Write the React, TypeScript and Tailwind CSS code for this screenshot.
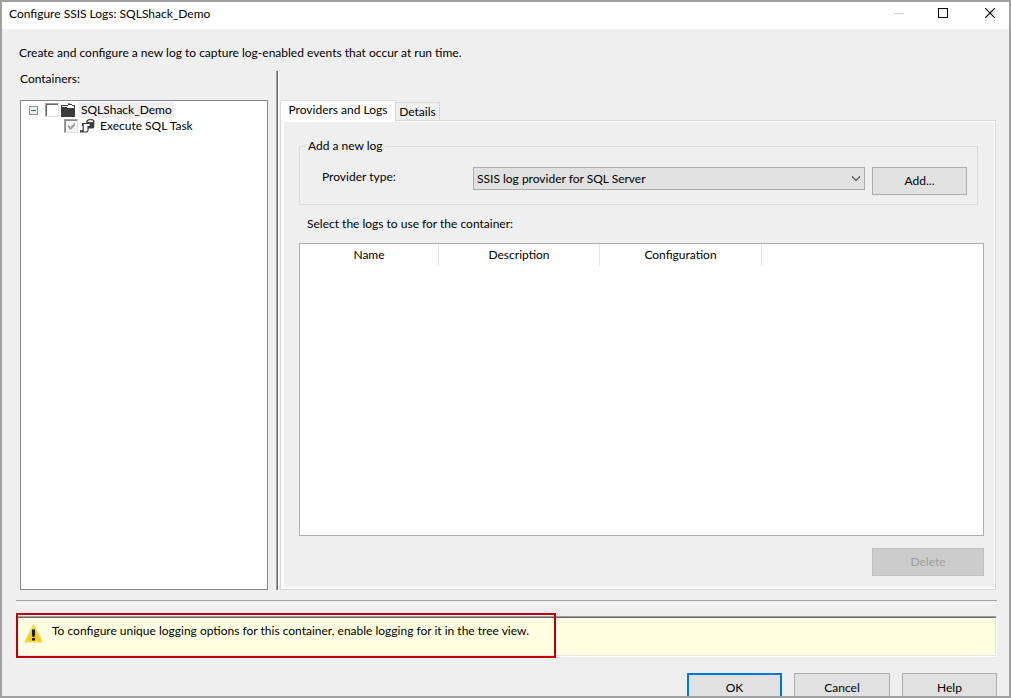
import { useState, type ReactNode } from "react";

const columns = ["Name", "Description", "Configuration"];
const providers = ["SSIS log provider for SQL Server"];

interface PushButtonProps {
    children: ReactNode;
    className: string;
    disabled?: boolean;
}

function PushButton({ children, className, disabled }: PushButtonProps) {
    return (
        <button
            type="button"
            disabled={disabled}
            className={`shrink-0 text-center disabled:border-[#bfbfbf] disabled:bg-[#cccccc] disabled:text-[#a0a0a0] ${className}`}
        >
            {children}
        </button>
    );
}

function TitleBar() {
    return (
        <header className="flex h-[27px] shrink-0 items-start justify-between bg-white pl-[7px]">
            <h1 className="pt-1 leading-4">Configure SSIS Logs: SQLShack_Demo</h1>
            <div className="flex">
                <button type="button" aria-label="Minimize" disabled className="flex h-[22px] w-[45px] items-center justify-center">
                    <svg width="10" height="10" shapeRendering="crispEdges">
                        <path d="M0 5.5h10" stroke="#cccccc" />
                    </svg>
                </button>
                <button type="button" aria-label="Maximize" className="flex h-[22px] w-[45px] items-center justify-center">
                    <svg width="11" height="10" shapeRendering="crispEdges">
                        <rect x="0.5" y="0.5" width="9" height="9" fill="none" stroke="#000" />
                    </svg>
                </button>
                <button type="button" aria-label="Close" className="flex h-[22px] w-[43px] items-center justify-center pl-[5px]">
                    <svg width="10" height="10">
                        <path d="M0.3 0.3l9.4 9.4M9.7 0.3l-9.4 9.4" stroke="#000" strokeWidth="1.2" />
                    </svg>
                </button>
            </div>
        </header>
    );
}

function TreeCheckbox({ id, checked, onChange }: { id: string; checked: boolean; onChange: () => void }) {
    return (
        <span className="relative h-3.5 w-3.5 shrink-0">
            <input
                id={id}
                type="checkbox"
                checked={checked}
                onChange={onChange}
                className="block h-3.5 w-3.5 appearance-none border border-t-[#a0a0a0] border-r-[#e3e3e3] border-b-[#e3e3e3] border-l-[#a0a0a0] bg-white shadow-[inset_1px_1px_0_#696969] checked:bg-[#f4f4f4] checked:shadow-[inset_1px_1px_0_#8a8a8a]"
            />
            {checked && (
                <svg className="pointer-events-none absolute inset-0" width="14" height="14">
                    <path d="M4 5.5v3L6.5 11 11 6.500V3.500L6.500 8z" fill="#a0a0a0" />
                </svg>
            )}
        </span>
    );
}

function FolderIcon() {
    return (
        <svg width="15" height="14" className="shrink-0" shapeRendering="crispEdges" aria-hidden="true">
            <path d="M0 5h14v9H0z" fill="#3c3c3c" />
            <path d="M0 2h6v1H0zM0 2h1v3H0zM7 1h4v1H7zM6 2h1v1H6zM11 2h3v3h-1V3h-2z" fill="#3c3c3c" />
            <path d="M1 3h5v1H1zM7 2h4v1H7zM6 3h7v1H6z" fill="#fff" />
            <path d="M1 4h5v1H1z" fill="#3c3c3c" />
            <path d="M7 0h2v1H7z" fill="#8a8a8a" />
        </svg>
    );
}

function TaskIcon() {
    return (
        <svg width="15" height="14" className="shrink-0" aria-hidden="true">
            <path d="M6.500 2v7.500h5.500c1.500 0 2.300-.8 2.300-1.800V2z" fill="#3c3c3c" />
            <ellipse cx="10.400" cy="2.200" rx="3.500" ry="1.600" fill="#fff" stroke="#3c3c3c" strokeWidth="1.100" />
            <path d="M3 4.500h7V8H8v4.500H3z" fill="#fff" />
            <path d="M2.500 7V4.500h7.700V7.500H8v4l-1 1.500H0.500v-1.200h2.700V5" fill="none" stroke="#3c3c3c" strokeWidth="1.200" />
        </svg>
    );
}

function ContainerTree() {
    const [open, setOpen] = useState(true);
    const [root, setRoot] = useState(false);
    const [task, setTask] = useState(true);

    return (
        <ul className="flex-1 border border-[#828790] bg-white pt-px pl-2">
            <li>
                <div className="flex h-4 items-center">
                    <button type="button" aria-label="Expand" aria-expanded={open} onClick={() => setOpen(!open)} className="mr-[7px] shrink-0">
                        <svg width="9" height="9" className="block" shapeRendering="crispEdges">
                            <rect x="0.5" y="0.5" width="8" height="8" fill="#f0f0f0" stroke="#919191" />
                            <path d="M2 4.5h5" stroke="#4060b8" />
                            {!open && <path d="M4.5 2v5" stroke="#4060b8" />}
                        </svg>
                    </button>
                    <TreeCheckbox id="root" checked={root} onChange={() => setRoot(!root)} />
                    <span className="w-0.5 shrink-0" />
                    <FolderIcon />
                    <label htmlFor="root" className="ml-[3px] bg-[#efefef] px-0.5 leading-4">SQLShack_Demo</label>
                </div>
                {open && (
                    <ul className="pl-[35px]">
                        <li className="flex h-4 items-center">
                            <TreeCheckbox id="task" checked={task} onChange={() => setTask(!task)} />
                            <span className="w-0.5 shrink-0" />
                            <TaskIcon />
                            <label htmlFor="task" className="ml-[3px] px-0.5 leading-4">Execute SQL Task</label>
                        </li>
                    </ul>
                )}
            </li>
        </ul>
    );
}

function ProvidersPanel() {
    return (
        <div className="flex flex-1 flex-col border border-[#d9d9d9]">
            <div className="flex flex-1 flex-col border-t border-r border-b-2 border-l-3 border-white pt-4 pr-2.5 pb-[11px] pl-[15px]">
                <fieldset className="mr-1.5 border border-[#dcdcdc] pr-2.5 pb-[9px] pl-[22px]">
                    <legend className="-ml-4 px-0.5 leading-4">Add a new log</legend>
                    <div className="flex items-start pt-[13px]">
                        <label htmlFor="provider" className="w-[151px] shrink-0 pt-0.5 leading-4">Provider type:</label>
                        <div className="relative flex-1">
                            <select id="provider" className="block h-[23px] w-full appearance-none border border-[#adadad] bg-[#e1e1e1] pl-[3px]">
                                {providers.map((name) => (
                                    <option key={name}>{name}</option>
                                ))}
                            </select>
                            <svg className="pointer-events-none absolute top-2 right-1" width="10" height="7">
                                <path d="M1 1.5l4 4 4-4" fill="none" stroke="#505050" strokeWidth="1.2" />
                            </svg>
                        </div>
                        <PushButton className="ml-[7px] h-7 w-[95px] border border-[#adadad] bg-[#e1e1e1]">Add...</PushButton>
                    </div>
                </fieldset>
                <p className="mt-[11px] pl-2 leading-4">Select the logs to use for the container:</p>
                <div className="mt-[11px] flex-1 border border-[#abadb3] bg-white">
                    <table className="w-full table-fixed border-separate border-spacing-0">
                        <colgroup>
                            <col className="w-[139px]" />
                            <col className="w-[161px]" />
                            <col className="w-[162px]" />
                            <col />
                        </colgroup>
                        <thead>
                            <tr className="h-[22px]">
                                {columns.map((name) => (
                                    <th key={name} scope="col" className="border-r border-[#e5e5e5] text-center font-normal">{name}</th>
                                ))}
                                <td />
                            </tr>
                        </thead>
                    </table>
                </div>
                <PushButton disabled className="mt-3 h-7 w-28 self-end border">Delete</PushButton>
            </div>
        </div>
    );
}

function WarningBar() {
    return (
        <div className="relative mr-3 ml-3.5 shrink-0">
            <div role="alert" className="flex h-[41px] items-start border-t border-r border-b border-t-[#a0a0a0] border-r-white border-b-white bg-[#ffffe1] pt-1.5 pl-2 shadow-[inset_0_1px_0_#696969,inset_-1px_-1px_0_#e3e3e3]">
                <svg width="19" height="19" viewBox="0 0 19 19" className="mt-px shrink-0" aria-hidden="true">
                    <path d="M9.5 1.2L17.8 17.6H1.2z" fill="#ffcc05" stroke="#f8d65c" strokeWidth="1.6" strokeLinejoin="round" />
                    <path d="M8 5.500h3v5.500l-.5 2h-2l-.5-2zM8 14h3v2.500H8z" fill="#1c1a10" />
                </svg>
                <p className="ml-[9px] leading-4">To configure unique logging options for this container, enable logging for it in the tree view.</p>
            </div>
            {/* highlight around the message */}
            <div className="pointer-events-none absolute -top-[3px] -bottom-px left-0 w-[540px] border-2 border-[#c00000]" />
        </div>
    );
}

export default function App() {
    return (
        <div className="flex h-screen flex-col overflow-hidden border-2 border-[#a0a0a0] bg-[#efefef] font-['Lato',sans-serif] text-[12px] leading-4 text-black">
            <TitleBar />
            <p className="mt-4 shrink-0 pl-[17px]">Create and configure a new log to capture log-enabled events that occur at run time.</p>
            <main className="mt-2.5 flex flex-1 pr-[13px] pl-[18px]">
                <section className="flex w-[248px] shrink-0 flex-col">
                    <h2 className="mb-[13px] leading-4">Containers:</h2>
                    <ContainerTree />
                </section>
                <div className="mr-px ml-2 w-[3px] shrink-0 border-r border-l border-r-white border-l-[#a0a0a0] bg-[#696969]" />
                <section className="flex flex-1 flex-col pt-[29px]">
                    <div role="tablist" className="flex h-5 items-end">
                        <button type="button" role="tab" aria-selected="true" className="relative -mb-0.5 h-[22px] w-[116px] border-t border-r border-l border-[#d9d9d9] bg-white pb-1">
                            Providers and Logs
                        </button>
                        <button type="button" role="tab" aria-selected="false" className="h-[18px] w-11 border-t border-r border-[#d9d9d9] leading-4">
                            Details
                        </button>
                    </div>
                    <ProvidersPanel />
                </section>
            </main>
            <div className="mt-2.5 mr-3 mb-3 ml-3.5 h-1 shrink-0 border-t border-b border-t-[#a0a0a0] border-b-white" />
            <WarningBar />
            <footer className="mt-4 flex h-[23px] shrink-0 justify-end gap-3 pr-3">
                <PushButton className="h-[30px] w-[95px] border-2 border-[#0078d7] bg-[#e1e1e1]">OK</PushButton>
                <PushButton className="h-[30px] w-24 border border-[#adadad] bg-[#e1e1e1]">Cancel</PushButton>
                <PushButton className="h-[30px] w-[95px] border border-[#adadad] bg-[#e1e1e1]">Help</PushButton>
            </footer>
        </div>
    );
}
